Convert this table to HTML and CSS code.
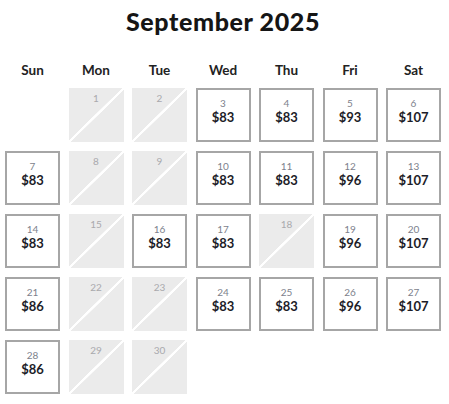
FILE: index.html
```html
<!DOCTYPE html>
<html lang="en">
<head>
<meta charset="utf-8">
<link rel="stylesheet" href="styles.css">
</head>
<body>
<div class="cal">
  <h1 class="title">September 2025</h1>
  <div class="grid">
    <div class="dow">Sun</div><div class="dow">Mon</div><div class="dow">Tue</div><div class="dow">Wed</div><div class="dow">Thu</div><div class="dow">Fri</div><div class="dow">Sat</div>

    <div class="empty"></div>
    <div class="day off"><span class="num">1</span></div>
    <div class="day off"><span class="num">2</span></div>
    <div class="day"><span class="num">3</span><span class="price">$83</span></div>
    <div class="day"><span class="num">4</span><span class="price">$83</span></div>
    <div class="day"><span class="num">5</span><span class="price">$93</span></div>
    <div class="day"><span class="num">6</span><span class="price">$107</span></div>

    <div class="day"><span class="num">7</span><span class="price">$83</span></div>
    <div class="day off"><span class="num">8</span></div>
    <div class="day off"><span class="num">9</span></div>
    <div class="day"><span class="num">10</span><span class="price">$83</span></div>
    <div class="day"><span class="num">11</span><span class="price">$83</span></div>
    <div class="day"><span class="num">12</span><span class="price">$96</span></div>
    <div class="day"><span class="num">13</span><span class="price">$107</span></div>

    <div class="day"><span class="num">14</span><span class="price">$83</span></div>
    <div class="day off"><span class="num">15</span></div>
    <div class="day"><span class="num">16</span><span class="price">$83</span></div>
    <div class="day"><span class="num">17</span><span class="price">$83</span></div>
    <div class="day off"><span class="num">18</span></div>
    <div class="day"><span class="num">19</span><span class="price">$96</span></div>
    <div class="day"><span class="num">20</span><span class="price">$107</span></div>

    <div class="day"><span class="num">21</span><span class="price">$86</span></div>
    <div class="day off"><span class="num">22</span></div>
    <div class="day off"><span class="num">23</span></div>
    <div class="day"><span class="num">24</span><span class="price">$83</span></div>
    <div class="day"><span class="num">25</span><span class="price">$83</span></div>
    <div class="day"><span class="num">26</span><span class="price">$96</span></div>
    <div class="day"><span class="num">27</span><span class="price">$107</span></div>

    <div class="day"><span class="num">28</span><span class="price">$86</span></div>
    <div class="day off"><span class="num">29</span></div>
    <div class="day off"><span class="num">30</span></div>
  </div>
</div>
</body>
</html>
```

FILE: styles.css
```css
html, body {
  margin: 0;
  padding: 0;
  background: #fff;
}
body {
  font-family: Lato, "Open Sans", sans-serif;
  color: #1f1f1f;
}
.cal {
  width: 436px;
  padding: 6px 0 0 5px;
}
.title {
  margin: 0;
  text-align: center;
  font-size: 25px;
  font-weight: 900;
  line-height: 30px;
  letter-spacing: 0.6px;
  color: #151515;
}
.grid {
  display: grid;
  grid-template-columns: repeat(7, 55px);
  grid-auto-rows: 54px;
  grid-template-rows: 20px;
  column-gap: 8.5px;
  row-gap: 9px;
  margin-top: 23px;
}
.dow {
  text-align: center;
  font-size: 13.5px;
  font-weight: 700;
  color: #222;
  line-height: 16px;
  margin-top: 3px;
}
.day {
  box-sizing: border-box;
  border: 2px solid #a6a6a6;
  display: flex;
  flex-direction: column;
  align-items: center;
  padding-top: 7px;
}
.num {
  font-size: 10px;
  line-height: 12px;
  color: #7d7f8c;
}
.price {
  font-size: 13px;
  font-weight: 700;
  line-height: 16px;
  color: #1d1d28;
}
.off {
  border: none;
  padding-top: 4px;
  background: linear-gradient(to bottom right, #ebebeb calc(50% - 1.3px), #fff calc(50% - 1px), #fff calc(50% + 1px), #ebebeb calc(50% + 1.3px));
}
.off .num {
  color: #a9a9ad;
}
```
